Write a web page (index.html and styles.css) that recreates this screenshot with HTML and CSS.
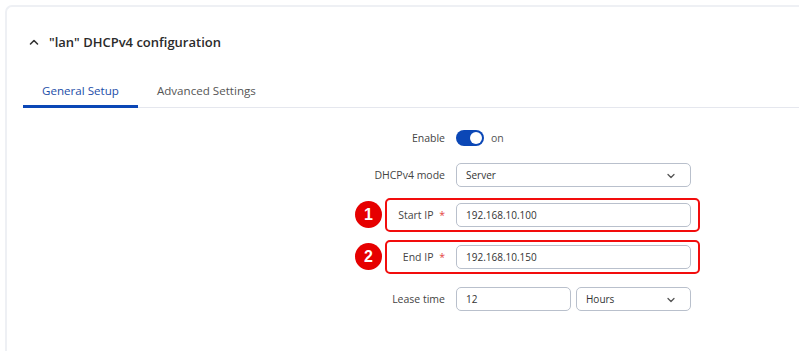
FILE: index.html
```html
<!DOCTYPE html>
<html>
<head>
<meta charset="utf-8">
<link rel="stylesheet" href="styles.css">
</head>
<body>
<div class="card">
  <div class="title">
    <svg class="chev-up" width="10" height="8" viewBox="0 0 10 8"><path d="M1.5 6 L5 2.5 L8.5 6" fill="none" stroke="#333" stroke-width="1.6" stroke-linecap="round" stroke-linejoin="round"/></svg>
    <span>"lan" DHCPv4 configuration</span>
  </div>
  <div class="tabs">
    <div class="tab active">General Setup</div>
    <div class="tab">Advanced Settings</div>
  </div>
  <div class="form">
    <div class="row r-enable">
      <div class="label">Enable</div>
      <div class="control">
        <span class="toggle"><span class="knob"></span></span>
        <span class="on">on</span>
      </div>
    </div>
    <div class="row r-mode">
      <div class="label">DHCPv4 mode</div>
      <div class="control">
        <div class="field select">Server
          <svg class="caret" width="10" height="6" viewBox="0 0 10 6"><path d="M2 1.5 L5 4.5 L8 1.5" fill="none" stroke="#555" stroke-width="1.3" stroke-linecap="round" stroke-linejoin="round"/></svg>
        </div>
      </div>
    </div>
    <div class="row r-start marked">
      <span class="badge">1</span>
      <div class="label">Start IP <span class="req">*</span></div>
      <div class="control"><div class="field">192.168.10.100</div></div>
    </div>
    <div class="row r-end marked">
      <span class="badge">2</span>
      <div class="label">End IP <span class="req">*</span></div>
      <div class="control"><div class="field">192.168.10.150</div></div>
    </div>
    <div class="row r-lease">
      <div class="label">Lease time</div>
      <div class="control split">
        <div class="field half">12</div>
        <div class="field half select">Hours
          <svg class="caret" width="10" height="6" viewBox="0 0 10 6"><path d="M2 1.5 L5 4.5 L8 1.5" fill="none" stroke="#555" stroke-width="1.3" stroke-linecap="round" stroke-linejoin="round"/></svg>
        </div>
      </div>
    </div>
  </div>
</div>
</body>
</html>
```
FILE: styles.css
```css
* { box-sizing: border-box; }
html, body { margin: 0; padding: 0; background: #fff; }
body {
  font-family: "Open Sans", "Noto Sans", "Liberation Sans", sans-serif;
  color: #333;
  width: 799px;
  height: 351px;
  overflow: hidden;
}
.card {
  margin: 5px 0 0 5px;
  height: 360px;
  border-top: 2px solid #eef0f4;
  border-left: 2px solid #eef0f4;
  border-top-left-radius: 7px;
}
.title {
  display: flex;
  align-items: center;
  padding: 25px 0 0 22px;
  height: 45px;
}
.chev-up { display: block; margin-right: 10px; }
.title span {
  font-size: 13px;
  font-weight: 600;
  color: #2b2b2b;
  line-height: 20px;
}
.tabs {
  display: flex;
  margin-left: 16px;
  margin-top: 28px;
  border-bottom: 1px solid #e5e7ee;
}
.tab {
  font-size: 11.6px;
  line-height: 16px;
  padding: 3px 19px 8px 19px;
  color: #555;
}
.tab.active {
  color: #1c4ea8;
  box-shadow: inset 0 -3px 0 #0b47b6;
  margin-bottom: -1px;
  padding-bottom: 9px;
}
.form { padding-top: 18px; }
.row {
  display: flex;
  align-items: center;
  height: 24px;
  position: relative;
}
.r-mode { margin-top: 13px; }
.r-start { margin-top: 16px; }
.r-end, .r-lease { margin-top: 18px; }
.label {
  width: 438px;
  text-align: right;
  font-size: 10.5px;
  color: #444;
}
.req { color: #e4423f; margin-left: 3px; }
.control {
  margin-left: 11px;
  width: 235px;
  display: flex;
  align-items: center;
}
.toggle {
  width: 28px;
  height: 16px;
  border-radius: 8px;
  background: #0b47b6;
  position: relative;
  display: inline-block;
}
.knob {
  position: absolute;
  right: 2px;
  top: 2px;
  width: 12px;
  height: 12px;
  border-radius: 50%;
  background: #fff;
}
.on { font-size: 10.5px; color: #555; margin-left: 7px; }
.field {
  width: 100%;
  height: 24px;
  border: 1px solid #b9c0cc;
  border-radius: 5px;
  font-size: 10px;
  color: #333;
  padding-left: 9px;
  display: flex;
  align-items: center;
  position: relative;
}
.split { gap: 5px; }
.field.half { width: 115px; }
.caret { position: absolute; right: 14px; top: 9px; }
.marked::before {
  content: "";
  position: absolute;
  left: 378px;
  top: -5px;
  bottom: -5px;
  width: 311px;
  border: 2px solid #f20d0d;
  border-radius: 5px;
}
.badge {
  position: absolute;
  left: 348px;
  top: -2px;
  width: 27px;
  height: 27px;
  border-radius: 50%;
  background: #e60000;
  color: #fff;
  font-weight: 700;
  font-size: 16px;
  display: flex;
  align-items: center;
  justify-content: center;
  font-family: "Liberation Sans", "Open Sans", sans-serif;
}
```
